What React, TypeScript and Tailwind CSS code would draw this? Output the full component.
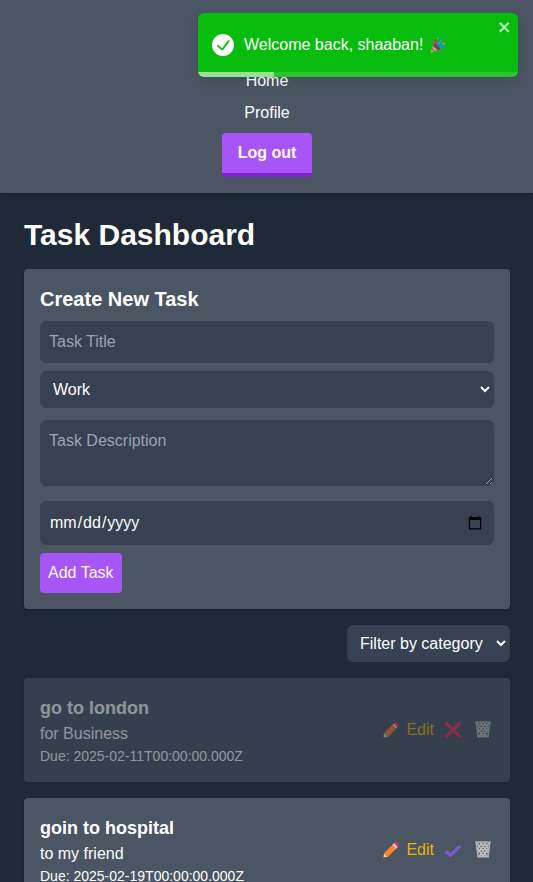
import React from 'react';

function Pencil() {
  return (
    <svg className="h-[18px] w-[18px] shrink-0" viewBox="0 0 18 18">
      <path d="M1.2 16.6 2.2 12.2 5.8 15.8Z" fill="#f6cf9b" />
      <path d="M1.2 16.6 1.5 15.2 2.6 16.3Z" fill="#5c4b45" />
      <path d="M2.1 12.1 11 3.2 14.8 7 5.9 15.9Z" fill="#ff822d" />
      <path d="M10.5 3.7 12.1 2.1 15.9 5.9 14.3 7.5Z" fill="#d3d3d3" />
      <path d="M12.1 2.1 12.9 1.3Q13.8.4 14.7 1.3L16.8 3.4Q17.7 4.3 16.7 5.1L15.9 5.9Z" fill="#f92f60" />
    </svg>
  );
}

function Cross() {
  return (
    <svg className="h-[18px] w-[18px]" viewBox="0 0 18 18">
      <path d="M2.5 2.3 15.5 15.3M15.5 2.3 2.5 15.3" fill="none" stroke="#f92f60" strokeWidth="3.1" strokeLinecap="round" />
    </svg>
  );
}

function Check() {
  return (
    <svg className="h-[18px] w-[18px]" viewBox="0 0 18 18">
      <path d="M2.7 11.1 6.4 14.4 15.2 5.9" fill="none" stroke="#7c5bd0" strokeWidth="3.3" strokeLinecap="round" strokeLinejoin="round" />
    </svg>
  );
}

function Bin() {
  return (
    <svg className="h-[18px] w-[18px]" viewBox="0 0 18 18">
      <path d="M2 1.5H16L14.4 15.5H3.6Z" fill="#70747c" />
      <path
        d="M3 2 12.5 15M6.5 2 14 12M10 2 15 8.5M3.5 7 9 15M15 2 5.5 15M11.5 2 4 12M8 2 3 8.5M14.5 7 9 15"
        fill="none"
        stroke="#d2d2d4"
        strokeWidth="1.2"
      />
      <path d="M2.3 2 3.9 15.3M15.7 2 14.1 15.3" stroke="#b4b4b7" strokeWidth="1.4" />
      <rect x="1" y=".2" width="16" height="2.1" rx=".7" fill="#a8a8ab" />
      <rect x="3.2" y="14.6" width="11.6" height="2" rx=".6" fill="#b9b9bc" />
    </svg>
  );
}

function Party() {
  return (
    <svg className="h-4 w-4" viewBox="0 0 16 16">
      <path d="M.6 15.5 3.8 6.8 10 12.3Z" fill="#ffb02e" />
      <path d="M3.5 7.8 9 12.7 7.3 13.4 2.8 9.5ZM2.3 11 5.6 14 3.9 14.6 1.6 12.7Z" fill="#8c5fc4" />
      <ellipse cx="7" cy="9.6" rx="1.9" ry="4.1" transform="rotate(-46 7 9.6)" fill="#8c3268" />
      <path d="M5.7 8Q7.4 5 4.9 2.8" fill="none" stroke="#e81c64" strokeWidth="1.8" />
      <path d="M7.5 8.2Q7.4 5.2 10.2 5Q12 4.8 11 1.8" fill="none" stroke="#00a6ed" strokeWidth="1.8" />
      <path d="M8.7 10Q11.5 7.4 15.3 10.6" fill="none" stroke="#0b96e3" strokeWidth="1.9" />
      <path d="M1.5 4H3V5.5H1.5ZM13 3.5H14.5V5H13ZM12 12.5H13.5V14H12Z" fill="#f92f60" />
      <path d="M7 .7H8.2V2H7ZM12.3 6H15V7.2H12.3Z" fill="#a6b54a" />
    </svg>
  );
}

function Toast() {
  return (
    <div className="absolute left-[198px] top-[13px] h-16 w-80 overflow-hidden rounded-md bg-[#07bc0c] shadow-[0_4px_12px_rgba(0,0,0,0.1)]">
      <div className="flex h-full items-center pl-3.5">
        <svg className="h-[22px] w-[22px]" viewBox="0 0 24 24" fill="#fff">
          <path d="M12 0a12 12 0 1012 12A12.014 12.014 0 0012 0zm6.927 8.2l-6.845 9.289a1.011 1.011 0 01-1.43.188l-4.888-3.908a1 1 0 111.25-1.562l4.076 3.261 6.227-8.451a1 1 0 111.61 1.183z" />
        </svg>
        <span className="ml-2.5 leading-6">Welcome back, shaaban!</span>
        <span className="ml-[7px]"><Party /></span>
      </div>
      <svg className="absolute right-1.5 top-1.5 h-4 w-3.5 opacity-70" viewBox="0 0 14 16" fill="#fff">
        <path d="M7.71 8.23l3.75 3.75-1.48 1.48-3.75-3.75-3.75 3.75L1 11.98l3.75-3.75L1 4.48 2.48 3l3.75 3.75L9.98 3l1.48 1.48-3.75 3.75z" />
      </svg>
      <div className="absolute bottom-0 left-0 h-[5px] w-full bg-white/14">
        <div className="h-full w-[76px] bg-white/50" />
      </div>
    </div>
  );
}

interface Task {
  title: string;
  text: string;
  due: string;
  done: boolean;
}

const tasks: Task[] = [
  { title: 'go to london', text: 'for Business', due: '2025-02-11T00:00:00.000Z', done: true },
  { title: 'goin to hospital', text: 'to my friend', due: '2025-02-19T00:00:00.000Z', done: false },
];

function TaskCard({ task }: { task: Task }) {
  return (
    <div className={`flex items-center justify-between rounded bg-[#4b5563] p-4 shadow ${task.done ? 'opacity-50' : ''}`}>
      <div>
        <h3 className="text-lg font-bold leading-7">{task.title}</h3>
        <p className="leading-6">{task.text}</p>
        <p className="text-sm leading-5">Due: {task.due}</p>
      </div>
      <div className="mr-0.5 flex items-center">
        <button className="flex items-center text-[#eab308]">
          <Pencil />
          <span className="ml-1.5">Edit</span>
        </button>
        <button className="ml-2.5">{task.done ? <Cross /> : <Check />}</button>
        <button className="ml-3"><Bin /></button>
      </div>
    </div>
  );
}

const field = 'block w-full rounded-md border border-[#374151] bg-[#374151] p-2 text-white placeholder:text-[#9ca3af]';

export default function App() {
  return (
    <div className="h-[882px] w-full overflow-hidden bg-[#1f2937] font-['Liberation_Sans',Arial,sans-serif] text-base text-white">
      <div className="relative w-[534px]">
        <header className="flex h-[193px] flex-col items-center bg-[#4b5563] pt-[69px] shadow-md">
          <a className="leading-6">Home</a>
          <a className="mt-2 leading-6">Profile</a>
          <button className="mt-2 h-11 rounded border-b-4 border-[#7e22ce] bg-[#a855f7] px-4 font-bold leading-6">Log out</button>
        </header>
        <main className="px-6 pt-6">
          <h1 className="mb-4 text-3xl font-bold leading-9">Task Dashboard</h1>
          <form className="h-[340px] rounded bg-[#4b5563] p-4 shadow">
            <h2 className="mb-2 text-xl font-bold leading-7">Create New Task</h2>
            <input className={`${field} h-[42px]`} placeholder="Task Title" />
            <select className={`${field} mt-2 h-[37px]`}>
              <option>Work</option>
            </select>
            <textarea className={`${field} mt-3 h-[66px] leading-6`} placeholder="Task Description" />
            <input type="date" className={`${field} mt-[15px] h-11`} />
            <button type="button" className="mt-2 block h-10 rounded bg-[#a855f7] px-2 leading-6">Add Task</button>
          </form>
          <div className="my-4 flex justify-end">
            <select className="h-[37px] w-[163px] rounded-md border border-[#374151] bg-[#374151] p-2">
              <option>Filter by category</option>
            </select>
          </div>
          <div className="flex flex-col gap-4">
            {tasks.map((t) => (
              <TaskCard key={t.title} task={t} />
            ))}
          </div>
        </main>
        <Toast />
      </div>
    </div>
  );
}
